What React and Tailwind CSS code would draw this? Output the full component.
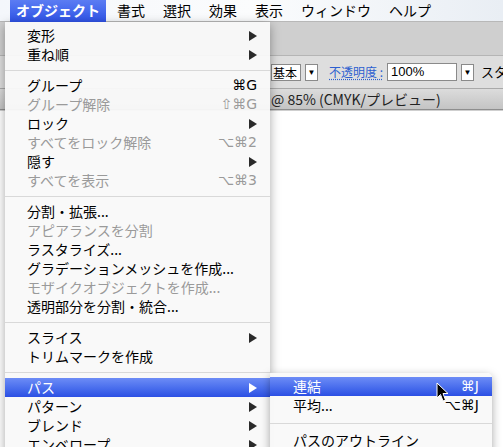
import React from 'react';

const JP = { fontFamily: '"Noto Sans CJK JP", "Noto Sans", sans-serif' };
const SYM = { fontFamily: '"DejaVu Sans", "Liberation Sans", sans-serif' };

const menuItems = [
  { label: '変形', sub: true },
  { label: '重ね順', sub: true },
  { sep: true },
  { label: 'グループ', key: '⌘G' },
  { label: 'グループ解除', key: '⇧⌘G', off: true },
  { label: 'ロック', sub: true },
  { label: 'すべてをロック解除', key: '⌥⌘2', off: true },
  { label: '隠す', sub: true },
  { label: 'すべてを表示', key: '⌥⌘3', off: true },
  { sep: true },
  { label: '分割・拡張...' },
  { label: 'アピアランスを分割', off: true },
  { label: 'ラスタライズ...' },
  { label: 'グラデーションメッシュを作成...' },
  { label: 'モザイクオブジェクトを作成...', off: true },
  { label: '透明部分を分割・統合...' },
  { sep: true },
  { label: 'スライス', sub: true },
  { label: 'トリムマークを作成' },
  { sep: true },
  { label: 'パス', sub: true, active: true },
  { label: 'パターン', sub: true },
  { label: 'ブレンド', sub: true },
  { label: 'エンベロープ', sub: true },
];

const subItems = [
  { label: '連結', key: '⌘J', active: true },
  { label: '平均...', key: '⌥⌘J' },
  { sep: true, tall: true },
  { label: 'パスのアウトライン' },
];

function Arrow({ white }) {
  return (
    <svg width="8" height="10" viewBox="0 0 8 10">
      <path d="M0 0 L8 5 L0 10 Z" fill={white ? '#ffffff' : '#2a2a2a'} />
    </svg>
  );
}

function Row({ item, padLeft }) {
  if (item.sep) {
    return (
      <div className={`${item.tall ? 'h-[16px]' : 'h-[12px]'} flex items-center`}>
        <div className="h-px w-full bg-[#d9d9d9]" />
      </div>
    );
  }
  const color = item.active ? 'text-white' : item.off ? 'text-[#9a9a9a]' : 'text-black';
  return (
    <div
      className={`h-[19px] flex items-center justify-between pr-[13px] ${padLeft} ${color} ${
        item.active ? 'bg-gradient-to-b from-[#6d8cf6] to-[#2c4fe4]' : ''
      }`}
    >
      <span style={JP} className="text-[14px] leading-[19px] whitespace-nowrap">{item.label}</span>
      {item.sub && <Arrow white={item.active} />}
      {item.key && (
        <span style={SYM} className="text-[14px] leading-[19px]">{item.key}</span>
      )}
    </div>
  );
}

export default function App() {
  const bar = ['書式', '選択', '効果', '表示', 'ウィンドウ', 'ヘルプ'];

  return (
    <div className="relative w-[503px] h-[447px] overflow-hidden bg-white">
      {/* menubar */}
      <div className="h-[22px] flex items-center bg-gradient-to-r from-[#f4f7fb] via-[#fbfcfd] to-[#e9eef4] border-b border-[#b8b8b8]">
        <div
          style={JP}
          className="ml-[10px] h-[22px] px-[6px] flex items-center text-[14px] font-bold text-white bg-gradient-to-b from-[#5b7cf3] to-[#2f52e6]"
        >
          オブジェクト
        </div>
        <div style={JP} className="flex items-center gap-[18px] ml-[11px] text-[14px] text-black">
          {bar.map((b) => (
            <span key={b}>{b}</span>
          ))}
        </div>
      </div>

      {/* toolbar */}
      <div className="h-[34px] bg-[#cfcfcf] border-b border-[#b5b5b5]" />
      <div className="h-[33px] bg-[#dedede] border-b border-[#a9a9a9] flex items-center pl-[271px] gap-[4px] whitespace-nowrap">
        <div style={JP} className="shrink-0 h-[17px] w-[30px] bg-white border border-[#8a8a8a] text-[12px] leading-[15px] pl-[1px]">
          基本
        </div>
        <div className="shrink-0 h-[17px] w-[13px] bg-white border border-[#8a8a8a] flex items-center justify-center text-[8px]">▼</div>
        <span
          style={JP}
          className="shrink-0 ml-[7px] text-[12px] text-[#2c5fd0] underline decoration-dotted underline-offset-2"
        >
          不透明度 :
        </span>
        <div className="shrink-0 h-[18px] w-[70px] bg-white border border-[#8a8a8a] text-[13px] leading-[16px] pl-[3px]" style={{ fontFamily: '"Liberation Sans", sans-serif' }}>
          100%
        </div>
        <div className="shrink-0 h-[17px] w-[13px] bg-white border border-[#8a8a8a] flex items-center justify-center text-[8px]">▼</div>
        <span style={JP} className="shrink-0 ml-[3px] text-[13px]">スター</span>
      </div>
      <div className="h-[21px] bg-gradient-to-b from-[#dcdcdc] to-[#c4c4c4] border-b border-[#8e8e8e] flex items-center pl-[271px]">
        <span style={JP} className="text-[14px] text-[#222]">@ 85% (CMYK/プレビュー)</span>
      </div>
      <div className="h-px bg-[#cfcfcf]" />

      {/* main menu */}
      <div className="absolute left-[5px] top-[22px] w-[265px] h-[440px] bg-[#f9f9f9]/95 shadow-[0_3px_10px_rgba(0,0,0,0.35)] pt-[4px]">
        {menuItems.map((it, i) => (
          <Row key={i} item={it} padLeft="pl-[22px]" />
        ))}
      </div>

      {/* submenu */}
      <div className="absolute left-[270px] top-[373px] w-[222px] h-[90px] bg-[#f9f9f9]/95 rounded-tr-[5px] shadow-[0_3px_10px_rgba(0,0,0,0.35)] pt-[4px]">
        {subItems.map((it, i) => (
          <Row key={i} item={it} padLeft="pl-[23px]" />
        ))}
      </div>

      {/* cursor */}
      <svg className="absolute left-[436px] top-[382px]" width="14" height="21" viewBox="0 0 14 21">
        <path d="M1 1 L1 16 L4.5 12.5 L7 19 L9.5 18 L7 11.5 L12 11.5 Z" fill="#000" stroke="#fff" strokeWidth="1" />
      </svg>
    </div>
  );
}
